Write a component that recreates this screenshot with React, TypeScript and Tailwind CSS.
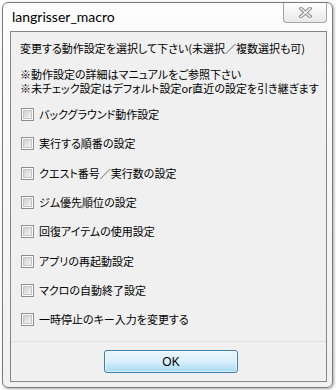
const options = [
  "バックグラウンド動作設定",
  "実行する順番の設定",
  "クエスト番号／実行数の設定",
  "ジム優先順位の設定",
  "回復アイテムの使用設定",
  "アプリの再起動設定",
  "マクロの自動終了設定",
  "一時停止のキー入力を変更する",
]

function CheckBox() {
  return (
    <div className="w-[13px] h-[13px] border border-[#8f8f8f] bg-white p-[1px] shrink-0">
      <div className="w-full h-full border border-[#c4c4c4] bg-gradient-to-br from-[#d2d2d2] to-[#f4f4f4]"></div>
    </div>
  )
}

function CloseButton() {
  return (
    <div className="w-[44px] h-[20px] border border-t-0 border-[#a3a3a3] rounded-b-[4px] bg-gradient-to-b from-[#ffffff] to-[#e9e9e9] flex items-center justify-center">
      <svg width="13" height="11" viewBox="0 0 13 11">
        <path d="M2 1.5 L11 9.5 M11 1.5 L2 9.5" stroke="#8a8a8a" strokeWidth="3.6" strokeLinecap="square" />
        <path d="M2 1.5 L11 9.5 M11 1.5 L2 9.5" stroke="#f2f2f2" strokeWidth="1.6" strokeLinecap="square" />
      </svg>
    </div>
  )
}

export default function App() {
  return (
    <div className="w-[336px] h-[390px] bg-white p-[2px]">
      <div className="w-[331px] h-[386px] border border-[#7b7b7b] rounded-[6px] bg-gradient-to-b from-[#fdfdfd] to-[#f1f1f1] shadow-[1px_1px_3px_rgba(0,0,0,0.35)] flex flex-col pl-[7px] pr-[5px] pb-[5px]">
        {/* Title bar */}
        <div className="h-[28px] flex items-start justify-between">
          <span className="pl-[2px] pt-[5px] text-[14px] leading-[18px] text-black font-['Lato',sans-serif]">
            langrisser_macro
          </span>
          <CloseButton />
        </div>

        {/* Client area */}
        <div className="h-[351px] border border-[#868686] bg-[#f0f0f0] flex flex-col font-['Noto_Sans_CJK_JP',sans-serif] text-[11px] text-black whitespace-nowrap [font-feature-settings:'palt']">
          <div className="flex-1 pl-[9px] pt-[10px]">
            <p className="leading-[13px]">変更する動作設定を選択して下さい(未選択／複数選択も可)</p>
            <p className="leading-[13.5px] mt-[13px]">※動作設定の詳細はマニュアルをご参照下さい</p>
            <p className="leading-[13.5px]">※未チェック設定はデフォルト設定or直近の設定を引き継ぎます</p>
            <div className="mt-[5px] flex flex-col">
              {options.map((label) => (
                <div key={label} className="h-[29.3px] flex items-center gap-[5px] pl-[1px]">
                  <CheckBox />
                  <span className="leading-[13px]">{label}</span>
                </div>
              ))}
            </div>
          </div>

          {/* Footer */}
          <div className="border-t border-[#dfdfdf] pt-[8px] pb-[8px] flex justify-center pl-[5px]">
            <button className="w-[134px] h-[23px] rounded-[3px] border border-[#3c7fb1] bg-gradient-to-b from-[#eaf6fd] via-[#d9f0fc] to-[#a7d9f5] shadow-[inset_0_0_0_1px_rgba(255,255,255,0.6)] text-[12px] text-black font-['Liberation_Sans',sans-serif]">
              OK
            </button>
          </div>
        </div>
      </div>
    </div>
  )
}
